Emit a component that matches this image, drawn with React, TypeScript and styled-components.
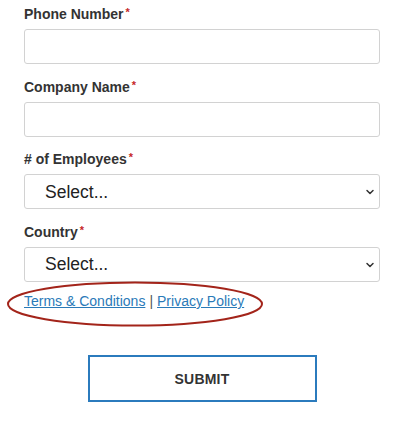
import React from 'react'
import styled, { createGlobalStyle } from 'styled-components'
import { ChevronDown } from 'lucide-react'

const Global = createGlobalStyle`
  html, body {
    margin: 0;
    padding: 0;
    background: #fff;
  }
  body {
    font-family: "Liberation Sans", Arial, sans-serif;
    color: #333;
  }
  * { box-sizing: border-box; }
`

const Form = styled.form`
  width: 380px;
  padding: 6px 0 0 24px;
  display: flex;
  flex-direction: column;
`

const Field = styled.div`
  display: flex;
  flex-direction: column;
  margin-bottom: 14.5px;
`

const Label = styled.label`
  font-size: 14px;
  line-height: 17px;
  height: 17px;
  font-weight: bold;
  color: #333;
  margin-bottom: 6px;
`

const Req = styled.span`
  color: #c62828;
  font-size: 11px;
  line-height: 0;
  position: relative;
  top: -3px;
  margin-left: 2px;
`

const TextInput = styled.input`
  height: 35px;
  width: 100%;
  border: 1px solid #d2d2d2;
  border-radius: 3px;
  background: #fff;
  outline: none;
`

const SelectWrap = styled.div`
  position: relative;
  height: 35px;
  svg {
    position: absolute;
    right: 4px;
    top: 12px;
    color: #333;
    pointer-events: none;
  }
`

const Select = styled.select`
  appearance: none;
  -webkit-appearance: none;
  width: 100%;
  height: 35px;
  border: 1px solid #d2d2d2;
  border-radius: 3px;
  background: #fff;
  padding: 0 0 0 20px;
  font-family: "Liberation Sans", Arial, sans-serif;
  font-size: 17.5px;
  color: #222;
  outline: none;
`

const Links = styled.div`
  position: relative;
  margin-top: -3px;
  font-size: 14px;
  line-height: 17px;
  color: #555;
  a {
    color: #2a7ab8;
    text-decoration: underline;
  }
`

const Sep = styled.span`
  margin: 0 4px;
`

const Ring = styled.svg`
  position: absolute;
  left: -18px;
  top: -12px;
  pointer-events: none;
`

const Submit = styled.button`
  align-self: center;
  margin-top: 45px;
  width: 229px;
  height: 47px;
  border: 2px solid #2b7bbd;
  background: #fff;
  font-family: "Liberation Sans", Arial, sans-serif;
  font-size: 14px;
  font-weight: bold;
  color: #333;
  letter-spacing: 0.2px;
`

const TextField = ({ label }: { label: string }) => (
  <Field>
    <Label>
      {label}
      <Req>*</Req>
    </Label>
    <TextInput type="text" />
  </Field>
)

const SelectField = ({ label }: { label: string }) => (
  <Field>
    <Label>
      {label}
      <Req>*</Req>
    </Label>
    <SelectWrap>
      <Select defaultValue="">
        <option value="">Select...</option>
      </Select>
      <ChevronDown size={12} strokeWidth={3} />
    </SelectWrap>
  </Field>
)

const App = () => {
  return (
    <>
      <Global />
      <Form onSubmit={e => e.preventDefault()}>
        <TextField label="Phone Number" />
        <TextField label="Company Name" />
        <SelectField label="# of Employees" />
        <SelectField label="Country" />
        <Links>
          <a href="#">Terms &amp; Conditions</a>
          <Sep>|</Sep>
          <a href="#">Privacy Policy</a>
          <Ring width="260" height="48" viewBox="0 0 260 48">
            <ellipse cx="129" cy="23" rx="127" ry="21.5" fill="none" stroke="#a3241a" strokeWidth="2" />
          </Ring>
        </Links>
        <Submit type="submit">SUBMIT</Submit>
      </Form>
    </>
  )
}

export default App
